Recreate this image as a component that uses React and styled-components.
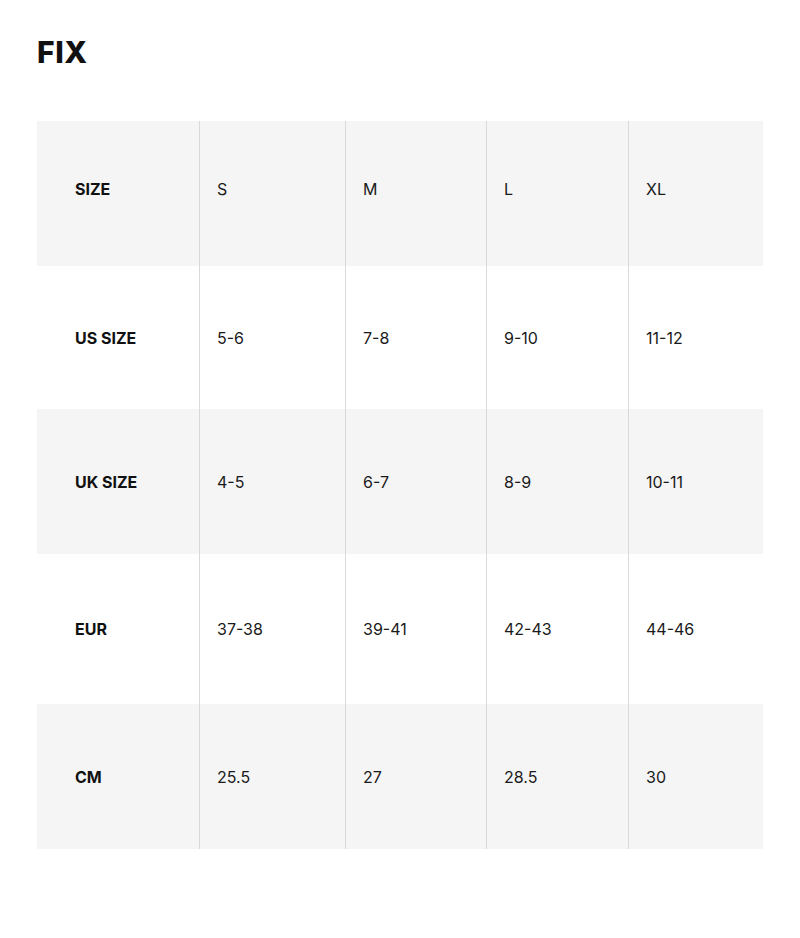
import React from 'react'
import styled, { createGlobalStyle } from 'styled-components';

const GlobalStyle = createGlobalStyle`
	body {
		margin: 0;
		background: #fff;
		font-family: 'Inter', 'Liberation Sans', sans-serif;
		color: #1a1a1a;
	}
`;

const Page = styled.div`
	padding: 34px 37px 0 37px;
`;

const Title = styled.h1`
	margin: 0;
	font-size: 30px;
	line-height: 36px;
	font-weight: 800;
	color: #111;
	letter-spacing: 0.6px;
`;

const Table = styled.div`
	margin-top: 51px;
	width: 726px;
	display: flex;
	flex-direction: column;
`;

const Row = styled.div`
	display: grid;
	grid-template-columns: 162px 146px 141px 142px 135px;
	height: ${(p) => p.$height}px;
	background: ${(p) => (p.$shaded ? '#f5f5f5' : '#fff')};
`;

const Cell = styled.div`
	display: flex;
	align-items: center;
	padding-left: 17px;
	padding-bottom: ${(p) => (p.$lift ? '9px' : '0')};
	font-size: 16px;
	font-weight: 400;
	border-left: 1px solid #d9d9d9;
`;

const HeadCell = styled(Cell)`
	padding-left: 38px;
	font-weight: 700;
	border-left: none;
	color: #111;
`;

const rows = [
	{ label: 'SIZE', values: ['S', 'M', 'L', 'XL'], height: 145, lift: true },
	{ label: 'US SIZE', values: ['5-6', '7-8', '9-10', '11-12'], height: 143 },
	{ label: 'UK SIZE', values: ['4-5', '6-7', '8-9', '10-11'], height: 145 },
	{ label: 'EUR', values: ['37-38', '39-41', '42-43', '44-46'], height: 150 },
	{ label: 'CM', values: ['25.5', '27', '28.5', '30'], height: 145 },
];

export default function App(){
	return <>
		<GlobalStyle />
		<Page>
			<Title>FIX</Title>
			<Table>
				{rows.map((row, i) => (
					<Row key={row.label} $shaded={i % 2 === 0} $height={row.height}>
						<HeadCell $lift={row.lift}>{row.label}</HeadCell>
						{row.values.map((v) => (
							<Cell key={v} $lift={row.lift}>{v}</Cell>
						))}
					</Row>
				))}
			</Table>
		</Page>
	</>
}
